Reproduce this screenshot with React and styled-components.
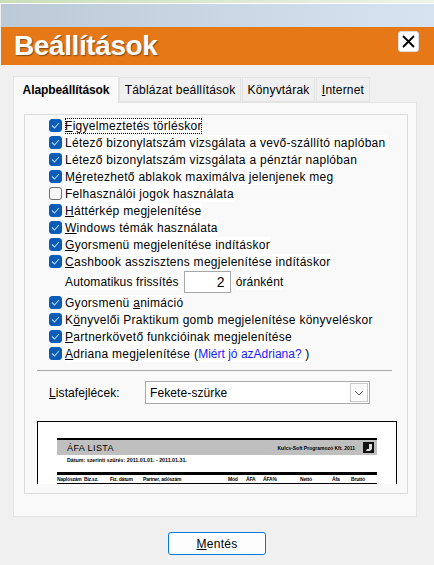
import React from 'react';
import styled, { createGlobalStyle } from 'styled-components';

const GlobalStyle = createGlobalStyle`
  html, body {
    margin: 0;
    padding: 0;
    background: #f0f0f0;
    font-family: "Liberation Sans", Arial, sans-serif;
  }
  * { box-sizing: border-box; }
`;

const Page = styled.div`
  width: 434px;
  height: 565px;
  overflow: hidden;
  background: #f0f0f0;
`;

const TopStrip = styled.div`
  height: 4px;
  background: linear-gradient(90deg, #c9dfba 0%, #d9e8cc 45%, #eef3e8 100%);
  border-bottom: 1px solid #fff;
`;

const BlueBand = styled.div`
  height: 23px;
  margin-left: 1px;
  background: linear-gradient(90deg, #bccad8 0%, #d6e4f2 100%);
`;

const TitleBar = styled.div`
  height: 38px;
  margin-left: 1px;
  padding: 0 15px 0 13px;
  background: #e67817;
  display: flex;
  align-items: center;
  justify-content: space-between;
`;

const Title = styled.h1`
  margin: 0;
  color: #fff;
  font-size: 28px;
  font-weight: 700;
  line-height: 38px;
  letter-spacing: -0.4px;
  text-shadow: 1px 1px 1px rgba(90, 60, 30, 0.7);
`;

const CloseButton = styled.button`
  width: 21px;
  height: 21px;
  margin-top: -9px;
  padding: 0;
  background: #fff;
  border: 1px solid #ddd;
  border-radius: 3px;
  display: flex;
  align-items: center;
  justify-content: center;
`;

const Content = styled.div`
  padding: 11px 17px 0 13px;
`;

const TabRow = styled.div`
  display: flex;
  align-items: flex-end;
  height: 26px;
`;

const Tab = styled.div`
  height: ${({ $active }) => ($active ? '27px' : '25px')};
  margin-bottom: ${({ $active }) => ($active ? '-1px' : '0')};
  margin-right: ${({ $active }) => ($active ? '0' : '1px')};
  width: ${({ $width }) => $width}px;
  background: ${({ $active }) => ($active ? '#f9f9f9' : '#f0f0f0')};
  border: 1px solid #e4e4e4;
  border-bottom: ${({ $active }) => ($active ? 'none' : '1px solid #e4e4e4')};
  color: #000;
  font-size: 12px;
  font-weight: ${({ $active }) => ($active ? 700 : 400)};
  letter-spacing: ${({ $active }) => ($active ? '-0.08px' : '0.2px')};
  display: flex;
  align-items: center;
  justify-content: center;
  white-space: nowrap;
  position: relative;
`;

const TabPanel = styled.div`
  height: 415px;
  padding: 11px 8px 0 10px;
  background: #f9f9f9;
  border: 1px solid #e4e4e4;
`;

const InnerPanel = styled.div`
  height: 380px;
  padding: 2px 9px 0 12px;
  background: #f9f9f9;
  border: 1px solid #dcdcdc;
`;

const Options = styled.div`
  display: flex;
  flex-direction: column;
  padding-left: 12px;
`;

const OptionRow = styled.div`
  height: 17px;
  display: flex;
  align-items: center;
  gap: 3px;
`;

const Box = styled.span`
  width: 13px;
  height: 13px;
  flex: none;
  border-radius: 3px;
  display: flex;
  align-items: center;
  justify-content: center;
  background: ${({ $checked }) => ($checked ? '#0a5cb8' : '#f7f7f7')};
  border: 1px solid ${({ $checked }) => ($checked ? '#0a5cb8' : '#6f6f6f')};
`;

const LabelText = styled.span`
  background: #fff;
  color: #000;
  font-size: 12px;
  line-height: 16px;
  letter-spacing: ${({ $tight }) => ($tight ? '0.14px' : '0.28px')};
  white-space: nowrap;
  outline: ${({ $focused }) => ($focused ? '1px dotted #000' : 'none')};
  outline-offset: -1px;
`;

const Blue = styled.span`
  color: #1a1aff;
  letter-spacing: 0;
`;

const AutoRow = styled.div`
  height: 24px;
  margin-left: 16px;
  display: flex;
  align-items: center;
  gap: 5px;
`;

const NumberBox = styled.div`
  width: 47px;
  height: 22px;
  padding-right: 5px;
  background: #fff;
  border: 1px solid #a8a8a8;
  font-size: 14px;
  line-height: 20px;
  text-align: right;
`;

const Divider = styled.div`
  height: 1px;
  margin-top: 8px;
  width: 355px;
  background: #a9a9a9;
`;

const ListRow = styled.div`
  display: flex;
  align-items: center;
  margin-top: 10px;
  height: 23px;
  padding-left: 12px;
`;

const ListLabel = styled.span`
  width: 96px;
  font-size: 12px;
  letter-spacing: 0.1px;
  color: #000;
`;

const SelectBox = styled.div`
  width: 225px;
  height: 23px;
  padding: 0 1px 0 4px;
  background: #fff;
  border: 1px solid #a8a8a8;
  display: flex;
  align-items: center;
  justify-content: space-between;
  font-size: 12px;
  letter-spacing: 0.1px;
`;

const SelectArrow = styled.span`
  width: 18px;
  height: 19px;
  background: #fff;
  border: 1px solid #c8c8c8;
  display: flex;
  align-items: center;
  justify-content: center;
`;

const Preview = styled.div`
  width: 360px;
  height: 63px;
  margin-top: 17px;
  padding: 16px 19px 0;
  overflow: hidden;
  background: #fff;
  border: 1px solid #000;
  border-bottom: none;
`;

const SheetHead = styled.div`
  height: 17px;
  padding: 0 3px 0 10px;
  background: #bfbfbf;
  border-top: 2px solid #000;
  display: flex;
  align-items: center;
  justify-content: space-between;
`;

const SheetTitle = styled.span`
  font-size: 9px;
  letter-spacing: 0.4px;
  color: #000;
`;

const SheetCompany = styled.span`
  font-size: 5px;
  font-weight: 700;
  margin-left: auto;
  margin-right: 8px;
  color: #000;
`;

const SheetLogo = styled.svg`
  width: 11px;
  height: 11px;
  flex: none;
`;

const SheetMeta = styled.div`
  padding: 2px 0 0 10px;
  height: 17px;
  font-size: 5.3px;
  font-weight: 700;
  color: #000;
`;

const SheetColumns = styled.div`
  display: grid;
  grid-template-columns: 27px 26px 33px 85px 18px 17px 37px 32px 19px 1fr;
  height: 12px;
  border-top: 3px solid #000;
  border-bottom: 1px solid #000;
  font-size: 5px;
  font-weight: 700;
  letter-spacing: -0.2px;
  line-height: 8px;
  color: #000;
  white-space: nowrap;
  overflow: hidden;
`;

const Footer = styled.div`
  display: flex;
  justify-content: center;
  margin-top: 15px;
  margin-left: 4px;
`;

const SaveButton = styled.button`
  width: 98px;
  height: 23px;
  padding: 0;
  background: #fdfdfd;
  border: 1px solid #0078d7;
  border-radius: 3px;
  color: #000;
  font-family: inherit;
  font-size: 12px;
  letter-spacing: 0.3px;
`;

const Key = styled.u`
  text-decoration: underline;
`;

function Check() {
  return (
    <svg width="9" height="7" viewBox="0 0 9 7" fill="none">
      <path d="M1 3.500l2.500 2.500 4.500-5" stroke="#bcd6f2" strokeWidth="1.1" />
    </svg>
  );
}

function Option({ checked = true, focused, children }) {
  return (
    <OptionRow>
      <Box $checked={checked}>{checked && <Check />}</Box>
      <LabelText $focused={focused}>{children}</LabelText>
    </OptionRow>
  );
}

const sheetColumns = ['Naplószám', 'Biz.sz.', 'Fiz. dátum', 'Partner, adószám', 'Mód', 'ÁFA', 'ÁFA%', 'Nettó', 'Áfa', 'Bruttó'];

export default function App() {
  return (
    <Page>
      <GlobalStyle />
      <TopStrip />
      <BlueBand />
      <TitleBar>
        <Title>Beállítások</Title>
        <CloseButton>
          <svg width="15" height="15" viewBox="0 0 15 15">
            <path d="M2 2l11 11M13 2L2 13" stroke="#000" strokeWidth="1.8" />
          </svg>
        </CloseButton>
      </TitleBar>
      <Content>
        <TabRow>
          <Tab $active $width={106}>Alapbeállítások</Tab>
          <Tab $width={122}>Táblázat beállítások</Tab>
          <Tab $width={73}>Könyvtárak</Tab>
          <Tab $width={54}><span><Key>I</Key>nternet</span></Tab>
        </TabRow>
        <TabPanel>
          <InnerPanel>
            <Options>
              <Option focused><Key>F</Key>igyelmeztetés törléskor</Option>
              <Option>Létező bizonylatszám vizsgálata a vevő-szállító naplóban</Option>
              <Option>Létező bizonylatszám vizsgálata a pénztár naplóban</Option>
              <Option>M<Key>é</Key>retezhető ablakok maximálva jelenjenek meg</Option>
              <Option checked={false}>Felhasználói jogok használata</Option>
              <Option><Key>H</Key>áttérkép megjelenítése</Option>
              <Option><Key>W</Key>indows témák használata</Option>
              <Option><Key>G</Key>yorsmenü megjelenítése indításkor</Option>
              <Option><Key>C</Key>ashbook asszisztens megjelenítése indításkor</Option>
              <AutoRow>
                <LabelText $tight>Automatikus frissítés</LabelText>
                <NumberBox>2</NumberBox>
                <LabelText $tight>óránként</LabelText>
              </AutoRow>
              <Option>Gyorsmenü <Key>a</Key>nimáció</Option>
              <Option>K<Key>ö</Key>nyvelői Praktikum gomb megjelenítése könyveléskor</Option>
              <Option><Key>P</Key>artnerkövető funkcióinak megjelenítése</Option>
              <Option><Key>A</Key>driana megjelenítése (<Blue>Miért jó azAdriana?</Blue> )</Option>
            </Options>
            <Divider />
            <ListRow>
              <ListLabel><Key>L</Key>istafejlécek:</ListLabel>
              <SelectBox>
                Fekete-szürke
                <SelectArrow>
                  <svg width="10" height="6" viewBox="0 0 10 6" fill="none">
                    <path d="M1 1l4 4 4-4" stroke="#555" />
                  </svg>
                </SelectArrow>
              </SelectBox>
            </ListRow>
            <Preview>
              <SheetHead>
                <SheetTitle>ÁFA LISTA</SheetTitle>
                <SheetCompany>Kulcs-Soft Programozó Kft. 2011</SheetCompany>
                <SheetLogo viewBox="0 0 11 11">
                  <rect width="11" height="11" fill="#111" />
                  <path d="M6 2h3v5l-2 2H3l1-2h2z" fill="#ddd" />
                </SheetLogo>
              </SheetHead>
              <SheetMeta>Dátum: szerinti szűrés: 2011.01.01. - 2011.01.31.</SheetMeta>
              <SheetColumns>
                {sheetColumns.map((name) => <span key={name}>{name}</span>)}
              </SheetColumns>
            </Preview>
          </InnerPanel>
        </TabPanel>
        <Footer>
          <SaveButton><Key>M</Key>entés</SaveButton>
        </Footer>
      </Content>
    </Page>
  );
}
